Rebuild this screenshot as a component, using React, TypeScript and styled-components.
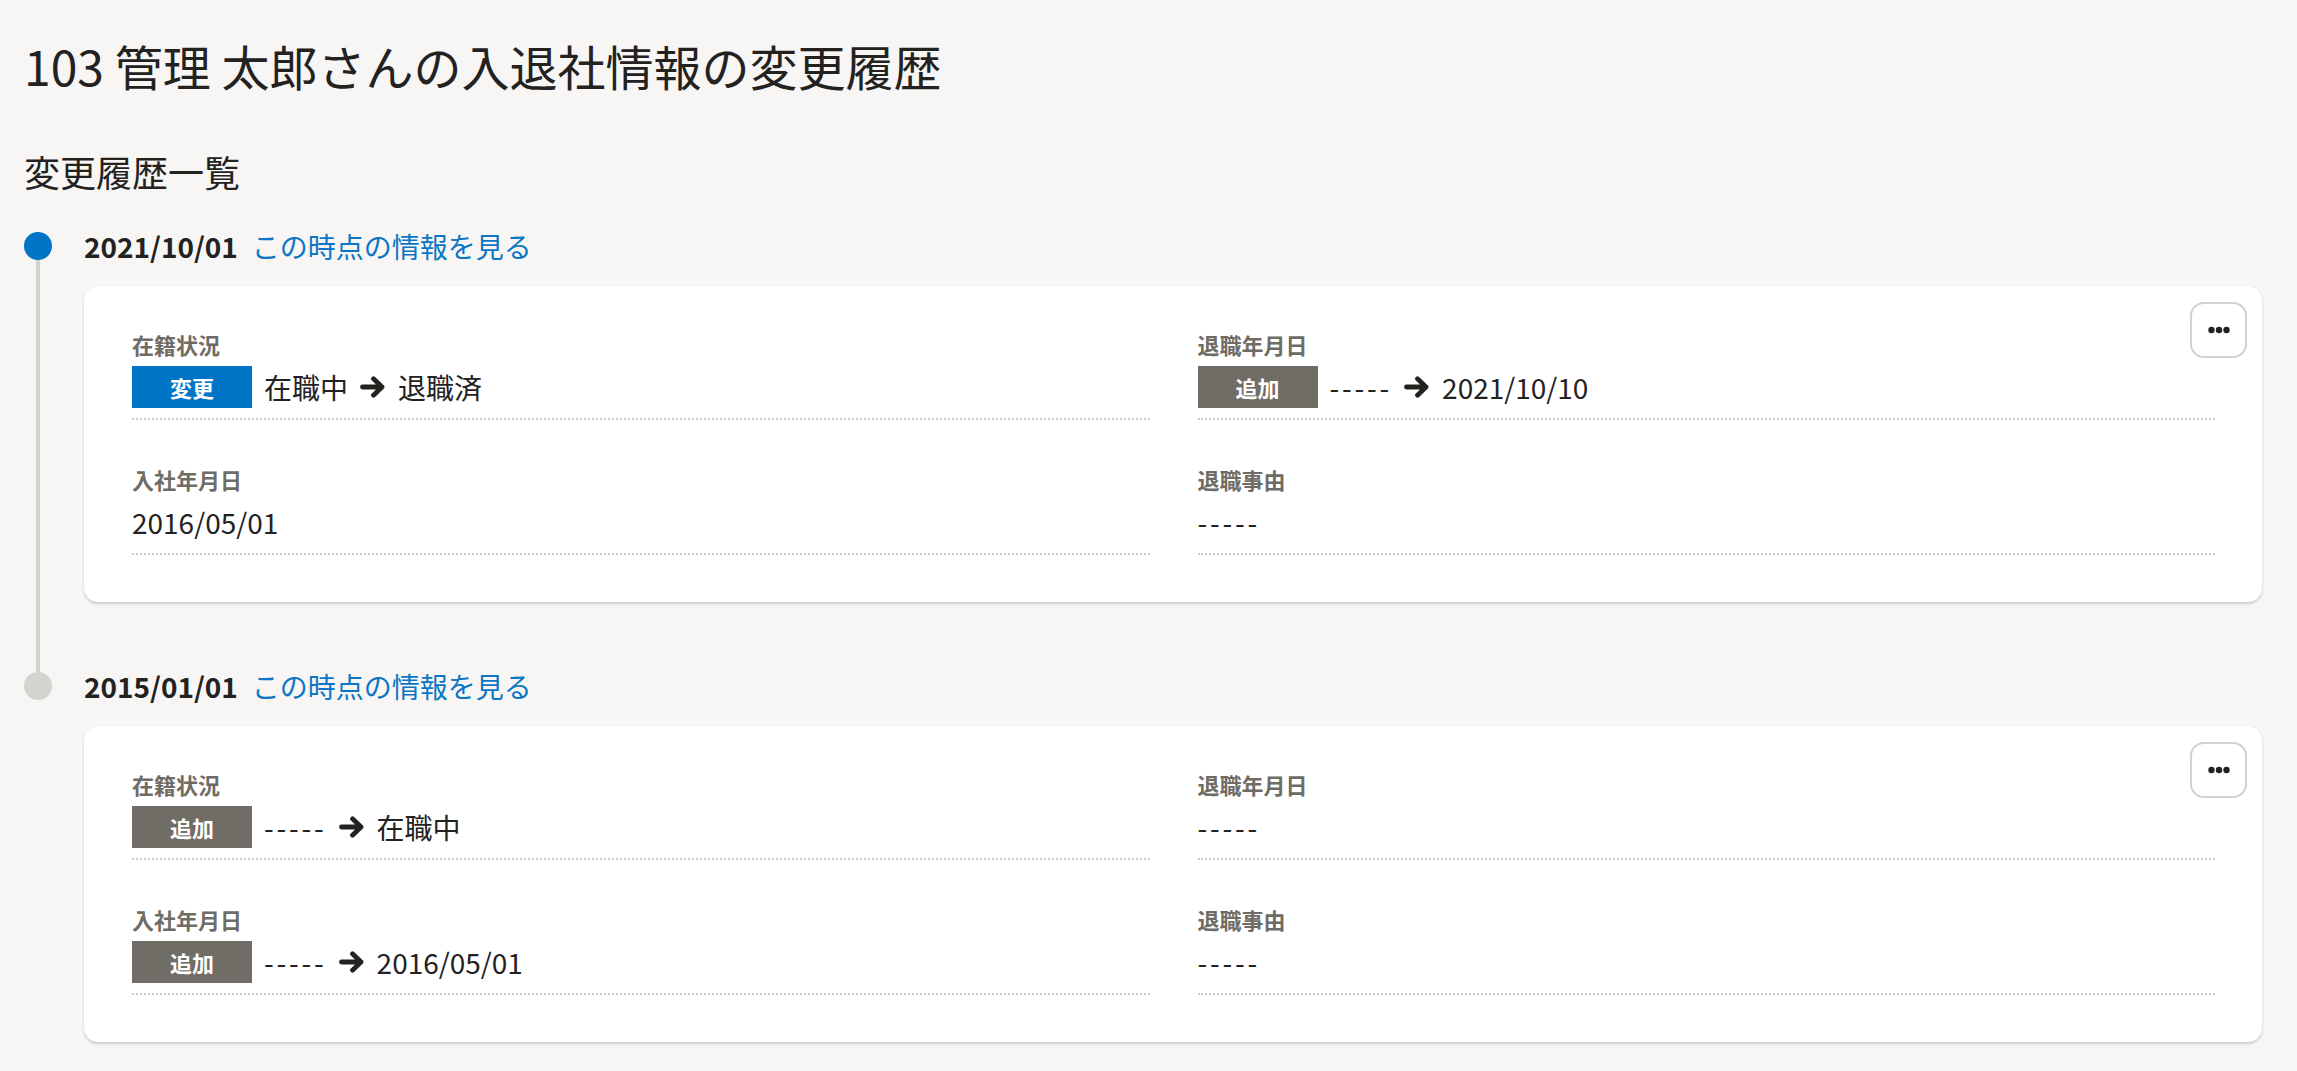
import React from "react";
import styled, { createGlobalStyle } from "styled-components";

const GlobalStyle = createGlobalStyle`
  html, body {
    margin: 0;
    padding: 0;
    background: #f7f6f4;
  }
  body {
    font-family: "Noto Sans CJK JP", "Noto Sans", sans-serif;
    color: #23221f;
  }
  * { box-sizing: border-box; }
`;

type BadgeKind = "change" | "add";

type Field = {
  label: string;
  badge?: BadgeKind;
  before?: string;
  after?: string;
  value?: string;
};

type HistoryItem = {
  date: string;
  active: boolean;
  fields: Field[];
};

const items: HistoryItem[] = [
  {
    date: "2021/10/01",
    active: true,
    fields: [
      { label: "在籍状況", badge: "change", before: "在職中", after: "退職済" },
      { label: "退職年月日", badge: "add", before: "-----", after: "2021/10/10" },
      { label: "入社年月日", value: "2016/05/01" },
      { label: "退職事由", value: "-----" },
    ],
  },
  {
    date: "2015/01/01",
    active: false,
    fields: [
      { label: "在籍状況", badge: "add", before: "-----", after: "在職中" },
      { label: "退職年月日", value: "-----" },
      { label: "入社年月日", badge: "add", before: "-----", after: "2016/05/01" },
      { label: "退職事由", value: "-----" },
    ],
  },
];

const Page = styled.main`
  padding: 29px 35px 28px 24px;
`;

const Title = styled.h1`
  margin: 0;
  font-size: 48px;
  line-height: 72px;
  font-weight: 400;
  color: #23221f;
`;

const SectionTitle = styled.h2`
  margin: 43px 0 0;
  font-size: 36px;
  line-height: 54px;
  font-weight: 400;
  color: #23221f;
`;

const Timeline = styled.div`
  margin-top: 34px;
  display: flex;
  flex-direction: column;
`;

const Item = styled.section`
  display: flex;
  gap: 32px;
`;

const Rail = styled.div`
  width: 28px;
  flex: 0 0 28px;
  display: flex;
  flex-direction: column;
  align-items: center;
`;

const Dot = styled.span<{ $active: boolean }>`
  width: 28px;
  height: 28px;
  border-radius: 50%;
  flex: 0 0 28px;
  background: ${(p) => (p.$active ? "#0075c8" : "#d5d3cf")};
`;

const RailLine = styled.span`
  width: 4px;
  flex: 1;
  background: #d5d3cf;
`;

const Content = styled.div<{ $last: boolean }>`
  flex: 1;
  min-width: 0;
  display: flex;
  flex-direction: column;
  gap: 26px;
  padding-bottom: ${(p) => (p.$last ? "0" : "70px")};
`;

const Header = styled.div`
  height: 28px;
  display: flex;
  align-items: center;
  gap: 14px;
`;

const DateText = styled.span`
  font-size: 28px;
  line-height: 28px;
  font-weight: 700;
  color: #23221f;
`;

const TimeLink = styled.a`
  font-size: 28px;
  line-height: 28px;
  color: #0b76c5;
  text-decoration: none;
  cursor: pointer;
`;

const Card = styled.div`
  position: relative;
  background: #ffffff;
  border-radius: 14px;
  box-shadow: 0 2px 3px rgba(0, 0, 0, 0.16), 0 0 1px rgba(0, 0, 0, 0.1);
  padding: 42px 47px 47px 48px;
`;

const MenuButton = styled.button`
  position: absolute;
  top: 16px;
  right: 15px;
  width: 57px;
  height: 56px;
  border: 2px solid #d3d1cd;
  border-radius: 14px;
  background: #ffffff;
  display: flex;
  align-items: center;
  justify-content: center;
  padding: 0;
  cursor: pointer;
`;

const Grid = styled.div`
  display: grid;
  grid-template-columns: 1fr 1fr;
  column-gap: 48px;
  row-gap: 43px;
`;

const FieldBox = styled.div`
  padding-bottom: 10px;
  border-bottom: 2px dotted #cdcbc7;
`;

const Label = styled.div`
  font-size: 22px;
  line-height: 33px;
  font-weight: 700;
  color: #6f6c66;
`;

const ValueRow = styled.div`
  margin-top: 5px;
  min-height: 42px;
  display: flex;
  align-items: center;
  gap: 12px;
  font-size: 28px;
  line-height: 42px;
  color: #23221f;
`;

const Badge = styled.span<{ $kind: BadgeKind }>`
  width: 120px;
  height: 42px;
  flex: 0 0 120px;
  display: flex;
  align-items: center;
  justify-content: center;
  font-size: 22px;
  font-weight: 700;
  color: #ffffff;
  background: ${(p) => (p.$kind === "change" ? "#0075c8" : "#706c66")};
`;

const Value = styled.span<{ $dash: boolean }>`
  letter-spacing: ${(p) => (p.$dash ? "0.1em" : "0")};
`;

const ArrowIcon = () => (
  <svg width="26" height="22" viewBox="0 0 26 22" aria-hidden="true">
    <path
      d="M2.5 11 H22 M13.5 2.8 L22 11 L13.5 19.2"
      fill="none"
      stroke="#23221f"
      strokeWidth="4.8"
      strokeLinecap="round"
      strokeLinejoin="round"
    />
  </svg>
);

const DotsIcon = () => (
  <svg width="22" height="8" viewBox="0 0 22 8" aria-hidden="true">
    <circle cx="3.5" cy="4" r="3.2" fill="#23221f" />
    <circle cx="11" cy="4" r="3.2" fill="#23221f" />
    <circle cx="18.5" cy="4" r="3.2" fill="#23221f" />
  </svg>
);

const badgeText: Record<BadgeKind, string> = {
  change: "変更",
  add: "追加",
};

const FieldView = ({ field }: { field: Field }) => (
  <FieldBox>
    <Label>{field.label}</Label>
    <ValueRow>
      {field.badge ? (
        <>
          <Badge $kind={field.badge}>{badgeText[field.badge]}</Badge>
          <Value $dash={field.before === "-----"}>{field.before}</Value>
          <ArrowIcon />
          <Value $dash={field.after === "-----"}>{field.after}</Value>
        </>
      ) : (
        <Value $dash={field.value === "-----"}>{field.value}</Value>
      )}
    </ValueRow>
  </FieldBox>
);

export default function App() {
  return (
    <>
      <GlobalStyle />
      <Page>
        <Title>103 管理 太郎さんの入退社情報の変更履歴</Title>
        <SectionTitle>変更履歴一覧</SectionTitle>
        <Timeline>
          {items.map((item, i) => {
            const last = i === items.length - 1;
            return (
              <Item key={item.date}>
                <Rail>
                  <Dot $active={item.active} />
                  {!last && <RailLine />}
                </Rail>
                <Content $last={last}>
                  <Header>
                    <DateText>{item.date}</DateText>
                    <TimeLink>この時点の情報を見る</TimeLink>
                  </Header>
                  <Card>
                    <MenuButton aria-label="メニュー">
                      <DotsIcon />
                    </MenuButton>
                    <Grid>
                      {item.fields.map((f) => (
                        <FieldView key={f.label} field={f} />
                      ))}
                    </Grid>
                  </Card>
                </Content>
              </Item>
            );
          })}
        </Timeline>
      </Page>
    </>
  );
}
